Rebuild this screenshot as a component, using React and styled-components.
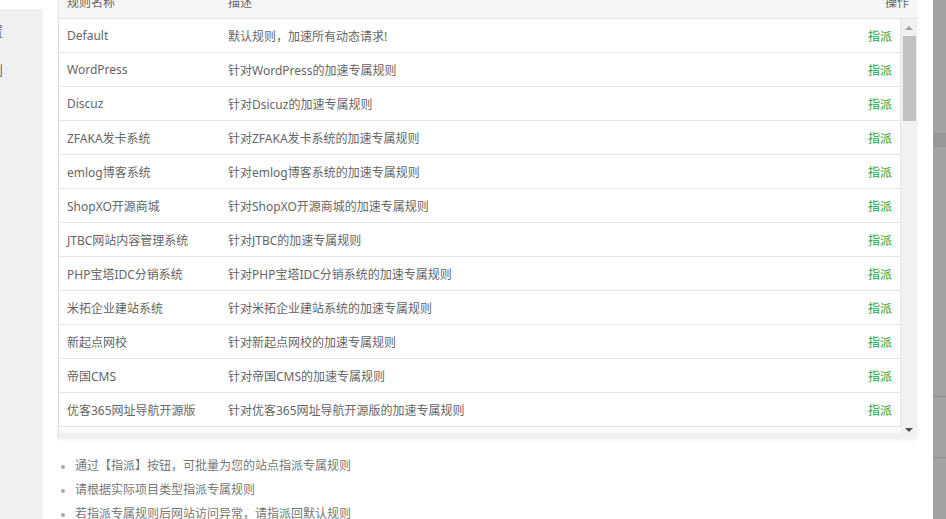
import React from "react";
import styled, { createGlobalStyle } from "styled-components";

const GlobalStyle = createGlobalStyle`
  html, body {
    margin: 0;
    padding: 0;
    background: #fff;
    overflow: hidden;
  }
  body {
    font-family: "Noto Sans", "Noto Sans CJK SC", sans-serif;
    font-size: 12px;
    color: #666;
  }
`;

const rules = [
  ["Default", "默认规则，加速所有动态请求!"],
  ["WordPress", "针对WordPress的加速专属规则"],
  ["Discuz", "针对Dsicuz的加速专属规则"],
  ["ZFAKA发卡系统", "针对ZFAKA发卡系统的加速专属规则"],
  ["emlog博客系统", "针对emlog博客系统的加速专属规则"],
  ["ShopXO开源商城", "针对ShopXO开源商城的加速专属规则"],
  ["JTBC网站内容管理系统", "针对JTBC的加速专属规则"],
  ["PHP宝塔IDC分销系统", "针对PHP宝塔IDC分销系统的加速专属规则"],
  ["米拓企业建站系统", "针对米拓企业建站系统的加速专属规则"],
  ["新起点网校", "针对新起点网校的加速专属规则"],
  ["帝国CMS", "针对帝国CMS的加速专属规则"],
  ["优客365网址导航开源版", "针对优客365网址导航开源版的加速专属规则"],
  ["易优CMS", "针对易优CMS的加速专属规则"],
];

const tips = [
  "通过【指派】按钮，可批量为您的站点指派专属规则",
  "请根据实际项目类型指派专属规则",
  "若指派专属规则后网站访问异常，请指派回默认规则",
];

const Page = styled.div`
  display: flex;
  width: 946px;
  height: 519px;
`;

const SideMenu = styled.div`
  width: 43px;
  margin-top: 9px;
  background: #f0f0f0;
  overflow: hidden;
  display: flex;
  flex-direction: column;
  padding-top: 15px;
  gap: 25px;
  box-sizing: border-box;
`;

const MenuItem = styled.div`
  margin-left: -23px;
  font-size: 13px;
  line-height: 14px;
  color: #666;
  white-space: nowrap;
`;

const Main = styled.div`
  flex: 1;
  padding: 0 16px 0 15px;
  overflow: hidden;
`;

const Shade = styled.div`
  width: 13px;
  background: linear-gradient(
    to bottom,
    #a2a2a2 0,
    #a2a2a2 133px,
    #979797 133px,
    #979797 147px,
    #a2a2a2 147px,
    #a2a2a2 396px,
    #8e8e8e 396px,
    #8e8e8e 397px,
    #a2a2a2 397px,
    #a2a2a2 457px,
    #8e8e8e 457px,
    #8e8e8e 458px,
    #a2a2a2 458px
  );
`;

const Table = styled.div`
  margin-top: -15px;
  width: 859px;
  box-shadow: 0 2px 3px rgba(0, 0, 0, 0.06);
`;

const Head = styled.div`
  display: flex;
  height: 32px;
  align-items: center;
  background: #f6f6f6;
  border: 1px solid #e4e4e4;
  border-right: none;
  color: #666;
`;

const Body = styled.div`
  display: flex;
  height: 419px;
  border-left: 1px solid #ddd;
`;

const Rows = styled.div`
  flex: 1;
  overflow: hidden;
  position: relative;
  &::after {
    content: "";
    position: absolute;
    left: 0;
    right: 0;
    bottom: 0;
    height: 10px;
    background: linear-gradient(to bottom, #fff, #ececec);
  }
`;

const Row = styled.div`
  display: flex;
  height: 33px;
  align-items: center;
  border-bottom: 1px solid #e4e4e4;
  border-right: 1px solid #e4e4e4;
`;

const NameCell = styled.div`
  width: 160px;
  box-sizing: border-box;
  padding-left: 8px;
  flex-shrink: 0;
  white-space: nowrap;
`;

const DescCell = styled.div`
  flex: 1;
  padding-left: 9px;
  white-space: nowrap;
`;

const ActionCell = styled.div`
  width: 80px;
  text-align: right;
  padding-right: 8px;
`;

const Assign = styled.a`
  color: #20a53a;
  text-decoration: none;
  cursor: pointer;
`;

const ScrollBar = styled.div`
  width: 16px;
  background: #f1f1f1;
  display: flex;
  flex-direction: column;
  align-items: center;
`;

const Arrow = styled.div`
  height: 17px;
  width: 16px;
  display: flex;
  align-items: center;
  justify-content: center;
  &::before {
    content: "";
    border-left: 4px solid transparent;
    border-right: 4px solid transparent;
    ${(p) =>
      p.$down
        ? "border-top: 4px solid #505050;"
        : "border-bottom: 4px solid #a3a3a3;"}
  }
`;

const Thumb = styled.div`
  width: 13px;
  height: 85px;
  background: #c1c1c1;
  margin-left: 1px;
`;

const Spacer = styled.div`
  flex: 1;
`;

const Tips = styled.ul`
  list-style: none;
  margin: 16px 0 0;
  padding: 0;
`;

const Tip = styled.li`
  position: relative;
  line-height: 24px;
  padding-left: 17px;
  color: #777;
  &::before {
    content: "";
    position: absolute;
    left: 3px;
    top: 11px;
    width: 4px;
    height: 4px;
    border-radius: 50%;
    background: #aaa;
  }
`;

export default function App() {
  return (
    <>
      <GlobalStyle />
      <Page>
        <SideMenu>
          <MenuItem>设置</MenuItem>
          <MenuItem>规则</MenuItem>
        </SideMenu>
        <Main>
          <Table>
            <Head>
              <NameCell>规则名称</NameCell>
              <DescCell>描述</DescCell>
              <ActionCell>操作</ActionCell>
            </Head>
            <Body>
              <Rows>
                {rules.map(([name, desc]) => (
                  <Row key={name}>
                    <NameCell>{name}</NameCell>
                    <DescCell>{desc}</DescCell>
                    <ActionCell>
                      <Assign>指派</Assign>
                    </ActionCell>
                  </Row>
                ))}
              </Rows>
              <ScrollBar>
                <Arrow />
                <Thumb />
                <Spacer />
                <Arrow $down />
              </ScrollBar>
            </Body>
          </Table>
          <Tips>
            {tips.map((t) => (
              <Tip key={t}>{t}</Tip>
            ))}
          </Tips>
        </Main>
        <Shade />
      </Page>
    </>
  );
}
